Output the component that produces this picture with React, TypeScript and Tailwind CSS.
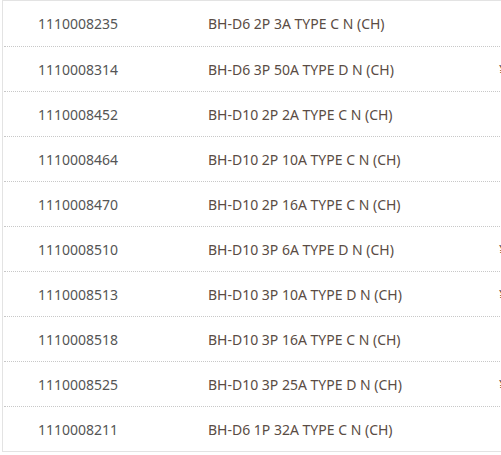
import React from "react";

type Row = { code: string; name: string; price?: string };

const rows: Row[] = [
  { code: "1110008235", name: "BH-D6 2P 3A TYPE C N (CH)" },
  { code: "1110008314", name: "BH-D6 3P 50A TYPE D N (CH)", price: "¥1,250.00" },
  { code: "1110008452", name: "BH-D10 2P 2A TYPE C N (CH)" },
  { code: "1110008464", name: "BH-D10 2P 10A TYPE C N (CH)" },
  { code: "1110008470", name: "BH-D10 2P 16A TYPE C N (CH)" },
  { code: "1110008510", name: "BH-D10 3P 6A TYPE D N (CH)", price: "¥980.00" },
  { code: "1110008513", name: "BH-D10 3P 10A TYPE D N (CH)", price: "¥980.00" },
  { code: "1110008518", name: "BH-D10 3P 16A TYPE C N (CH)" },
  { code: "1110008525", name: "BH-D10 3P 25A TYPE D N (CH)", price: "¥1,020.00" },
  { code: "1110008211", name: "BH-D6 1P 32A TYPE C N (CH)" },
];

export default function App() {
  return (
    <main
      className="w-[501px] h-[455px] overflow-hidden bg-white pl-[2px]"
      style={{ fontFamily: '"Noto Sans", "Open Sans", sans-serif' }}
    >
      {/* table runs past the right edge; price column is cut off like the original */}
      <div className="w-[640px] border border-[#e3e3e3] bg-white">
        {rows.map((r, i) => (
          <div
            key={r.code}
            className={
              "mx-[1px] grid grid-cols-[204px_291px_120px] items-center text-[14px] " +
              (i === 0 ? "h-[46px] " : i === rows.length - 1 ? "h-[44px] " : "h-[45px] ") +
              (i < rows.length - 1 ? "border-b border-dotted border-[#c8c8c8]" : "")
            }
          >
            <span className="pl-[34px] text-[#555]">{r.code}</span>
            <span className="text-[#5a4c44]">{r.name}</span>
            <span className="text-[#5a4c44]">{r.price ?? ""}</span>
          </div>
        ))}
      </div>
    </main>
  );
}
